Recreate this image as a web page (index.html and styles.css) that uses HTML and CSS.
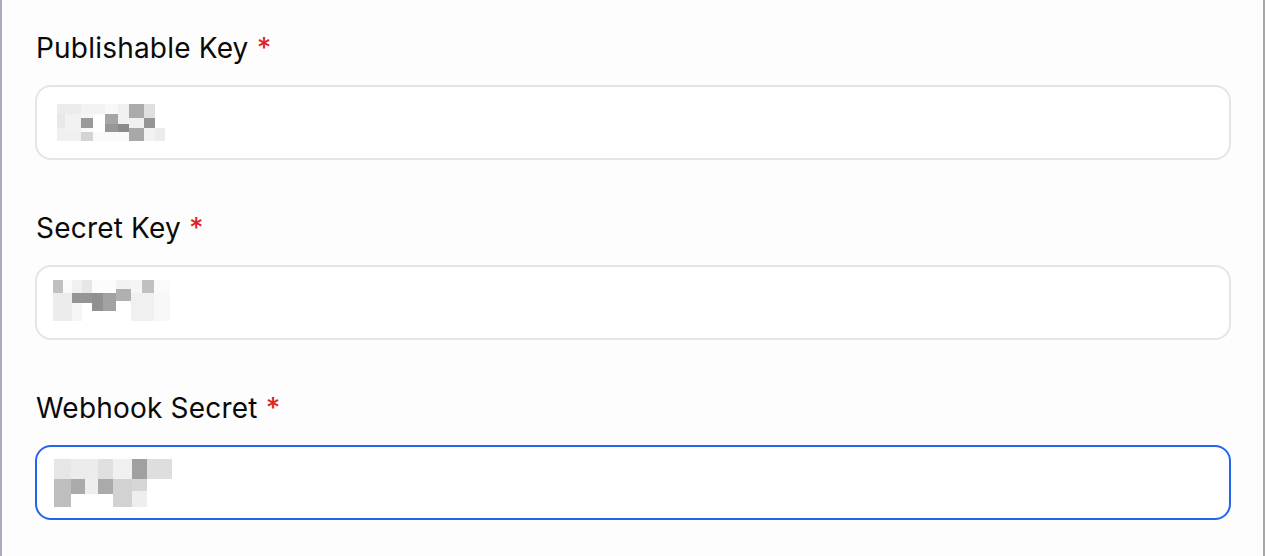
FILE: index.html
```html
<!DOCTYPE html>
<html lang="en">
<head>
<meta charset="utf-8">
<title>Keys</title>
<link rel="stylesheet" href="styles.css">
</head>
<body>
<div class="panel">
  <div class="field">
    <label class="label">Publishable Key <span class="req">*</span></label>
    <div class="input">
      <svg class="mosaic m1" width="108" height="37" viewBox="0 0 108 37" shape-rendering="crispEdges" aria-hidden="true">
        <rect x="0" y="0" width="24" height="10" fill="#ececec"/>
        <rect x="24" y="0" width="24" height="10" fill="#f3f3f3"/>
        <rect x="48" y="0" width="13" height="10" fill="#f8f8f8"/>
        <rect x="61" y="0" width="11" height="14" fill="#f0f0f0"/>
        <rect x="72" y="0" width="15" height="14" fill="#aaaaaa"/>
        <rect x="87" y="0" width="11" height="14" fill="#e0e0e0"/>
        <rect x="0" y="10" width="8" height="14" fill="#e8e8e8"/>
        <rect x="8" y="10" width="16" height="18" fill="#f2f2f2"/>
        <rect x="24" y="10" width="12" height="4" fill="#f5f5f5"/>
        <rect x="24" y="14" width="12" height="10" fill="#9a9a9a"/>
        <rect x="48" y="10" width="13" height="10" fill="#a5a5a5"/>
        <rect x="48" y="20" width="13" height="8" fill="#979797"/>
        <rect x="61" y="14" width="11" height="6" fill="#f0f0f0"/>
        <rect x="61" y="20" width="11" height="8" fill="#8a8a8a"/>
        <rect x="72" y="14" width="15" height="10" fill="#f0f0f0"/>
        <rect x="72" y="24" width="15" height="13" fill="#a8a8a8"/>
        <rect x="87" y="14" width="11" height="10" fill="#959595"/>
        <rect x="0" y="24" width="8" height="13" fill="#f0f0f0"/>
        <rect x="8" y="28" width="16" height="9" fill="#f0f0f0"/>
        <rect x="24" y="24" width="12" height="4" fill="#fafafa"/>
        <rect x="24" y="28" width="12" height="9" fill="#d4d4d4"/>
        <rect x="36" y="28" width="36" height="9" fill="#fafafa"/>
        <rect x="87" y="24" width="11" height="13" fill="#f2f2f2"/>
        <rect x="98" y="24" width="10" height="13" fill="#ececec"/>
      </svg>
    </div>
  </div>

  <div class="field">
    <label class="label">Secret Key <span class="req">*</span></label>
    <div class="input">
      <svg class="mosaic m2" width="117" height="41" viewBox="0 0 117 41" shape-rendering="crispEdges" aria-hidden="true">
        <rect x="0" y="0" width="10" height="13" fill="#c0c0c0"/>
        <rect x="10" y="0" width="9" height="13" fill="#fafafa"/>
        <rect x="19" y="0" width="10" height="13" fill="#f0f0f0"/>
        <rect x="29" y="0" width="10" height="13" fill="#e6e6e6"/>
        <rect x="39" y="0" width="24" height="13" fill="#fcfcfc"/>
        <rect x="63" y="0" width="15" height="9" fill="#f2f2f2"/>
        <rect x="63" y="9" width="15" height="12" fill="#b0b0b0"/>
        <rect x="78" y="0" width="11" height="13" fill="#f5f5f5"/>
        <rect x="89" y="0" width="12" height="13" fill="#c0c0c0"/>
        <rect x="101" y="0" width="16" height="13" fill="#fafafa"/>
        <rect x="0" y="13" width="19" height="28" fill="#ececec"/>
        <rect x="19" y="13" width="20" height="10" fill="#959595"/>
        <rect x="19" y="23" width="10" height="18" fill="#f5f5f5"/>
        <rect x="39" y="13" width="11" height="18" fill="#909090"/>
        <rect x="50" y="13" width="13" height="18" fill="#a2a2a2"/>
        <rect x="78" y="13" width="23" height="28" fill="#f0f0f0"/>
        <rect x="101" y="13" width="16" height="28" fill="#f8f8f8"/>
      </svg>
    </div>
  </div>

  <div class="field">
    <label class="label">Webhook Secret <span class="req">*</span></label>
    <div class="input focused">
      <svg class="mosaic m3" width="118" height="48" viewBox="0 0 118 48" shape-rendering="crispEdges" aria-hidden="true">
        <rect x="0" y="0" width="17" height="20" fill="#e6e6e6"/>
        <rect x="17" y="0" width="27" height="20" fill="#ececec"/>
        <rect x="44" y="0" width="15" height="20" fill="#e0e0e0"/>
        <rect x="59" y="0" width="19" height="20" fill="#f0f0f0"/>
        <rect x="78" y="0" width="15" height="20" fill="#a0a0a0"/>
        <rect x="93" y="0" width="25" height="20" fill="#dedede"/>
        <rect x="0" y="20" width="17" height="28" fill="#bebebe"/>
        <rect x="17" y="20" width="14" height="15" fill="#aaaaaa"/>
        <rect x="31" y="20" width="13" height="15" fill="#eeeeee"/>
        <rect x="44" y="20" width="15" height="15" fill="#aaaaaa"/>
        <rect x="59" y="20" width="19" height="28" fill="#d2d2d2"/>
        <rect x="78" y="20" width="15" height="12" fill="#d6d6d6"/>
        <rect x="78" y="32" width="15" height="16" fill="#eeeeee"/>
      </svg>
    </div>
  </div>
</div>
</body>
</html>
```

FILE: styles.css
```css
* { box-sizing: border-box; }

html, body {
  margin: 0;
  padding: 0;
  background: #ffffff;
}

body {
  font-family: Inter, "Noto Sans", "Liberation Sans", sans-serif;
  color: #0a0a0a;
}

.panel {
  width: 1265px;
  height: 556px;
  background: #fdfdfd;
  border-left: 2px solid #a9adb8;
  border-right: 2px solid #a4a6ae;
  padding: 30px 32px 0 33px;
  display: flex;
  flex-direction: column;
  gap: 50px;
}

.field {
  display: flex;
  flex-direction: column;
  gap: 19px;
}

.label {
  display: block;
  font-size: 28px;
  line-height: 36px;
  font-weight: 400;
  letter-spacing: 0.2px;
  color: #0a0a0a;
  padding-left: 1px;
}

.req {
  color: #e02424;
  font-weight: 500;
}

.input {
  height: 75px;
  border: 2px solid #e5e5e9;
  border-radius: 16px;
  background: #ffffff;
  display: flex;
  align-items: center;
  padding-left: 20px;
}

.input.focused {
  border-color: #2563eb;
}

.mosaic { display: block; }
.m2 { margin-left: -4px; margin-top: -4px; }
.m3 { margin-left: -3px; }
```
